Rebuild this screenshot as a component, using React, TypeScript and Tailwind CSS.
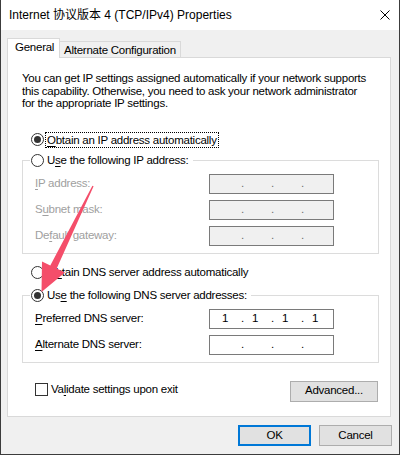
import React from 'react';

const font = "font-['Liberation_Sans','Noto_Sans_CJK_SC',sans-serif]";

function Key({ children }: { children: React.ReactNode }) {
  return <span className="underline decoration-1 underline-offset-[2px]">{children}</span>;
}

function Radio({ checked }: { checked?: boolean }) {
  return (
    <span className="flex h-[13px] w-[13px] shrink-0 items-center justify-center rounded-full border border-[#333333] bg-white">
      {checked && <span className="h-[7px] w-[7px] rounded-full bg-[#333333]" />}
    </span>
  );
}

function IpField({ values, disabled }: { values?: string[]; disabled?: boolean }) {
  return (
    <div
      className={`flex h-[20px] w-[125px] items-center overflow-hidden border border-[#7a7a7a] pl-[4px] ${
        disabled ? 'bg-[#f0f0f0] text-[#6d6d6d]' : 'bg-white text-black'
      }`}
    >
      {[0, 1, 2, 3].map((i) => (
        <React.Fragment key={i}>
          <span className="w-[22px] shrink-0 text-center">{values ? values[i] : ''}</span>
          {i < 3 && <span className="w-[8px] shrink-0 text-right">.</span>}
        </React.Fragment>
      ))}
    </div>
  );
}

function FieldRow({
  label,
  disabled,
  values,
}: {
  label: React.ReactNode;
  disabled?: boolean;
  values?: string[];
}) {
  return (
    <div className="flex items-center">
      <span className={`w-[174px] shrink-0 ${disabled ? 'text-[#a0a0a0]' : ''}`}>{label}</span>
      <IpField disabled={disabled} values={values} />
    </div>
  );
}

export default function App() {
  return (
    <div
      className={`relative flex h-[455px] w-[400px] flex-col overflow-hidden border-x border-b border-[#3c3c3c] bg-[#f0f0f0] text-[11.5px] tracking-[-0.25px] text-black ${font}`}
    >
      {/* title bar */}
      <div className="flex h-[30px] shrink-0 items-center justify-between bg-white pl-[8px] pr-[9px]">
        <span className="text-[12px] tracking-normal">Internet 协议版本 4 (TCP/IPv4) Properties</span>
        <svg width="10" height="10" viewBox="0 0 10 10" className="text-black">
          <path d="M0.5 0.5 L9.5 9.5 M9.5 0.5 L0.5 9.5" stroke="currentColor" strokeWidth="1" />
        </svg>
      </div>

      <div className="flex flex-col pl-[6px] pr-[8px] pt-[8px]">
        {/* tabs */}
        <div className="relative z-10 flex h-[20px] items-end">
          <div className="flex h-[20px] w-[53px] items-center border-x border-t border-[#d9d9d9] bg-white pb-[1px] pl-[7px]">
            General
          </div>
          <div className="mb-px flex h-[16px] w-[121px] items-center border-r border-t border-[#d9d9d9] bg-[#f0f0f0] pl-[4px] pt-[2px]">
            Alternate Configuration
          </div>
        </div>

        {/* panel */}
        <div className="-mt-px flex h-[360px] flex-col border border-[#d9d9d9] bg-white">
          <p className="px-[14px] pt-[14px] leading-[12.5px]">
            You can get IP settings assigned automatically if your network supports
            <br />
            this capability. Otherwise, you need to ask your network administrator
            <br />
            for the appropriate IP settings.
          </p>

          <div className="ml-[23px] mt-[22px] flex h-[16px] items-center gap-[1px]">
            <Radio checked />
            <span className="border border-dotted border-black px-[1px] leading-[14px]">
              <Key>O</Key>btain an IP address automatically
            </span>
          </div>

          <fieldset className="ml-[14px] mr-[11px] mt-[5px] border border-[#dcdcdc] pb-[7px]">
            <legend className="ml-[7px] flex h-[16px] items-center gap-[3px] pl-[1px] pr-[4px]">
              <Radio />
              <span>
                U<Key>s</Key>e the following IP address:
              </span>
            </legend>
            <div className="mt-[5px] flex flex-col gap-[6px] pl-[12px]">
              <FieldRow disabled label={<><Key>I</Key>P address:</>} />
              <FieldRow disabled label={<>S<Key>u</Key>bnet mask:</>} />
              <FieldRow disabled label={<>De<Key>f</Key>ault gateway:</>} />
            </div>
          </fieldset>

          <div className="ml-[23px] mt-[11px] flex h-[16px] items-center gap-[3px]">
            <Radio />
            <span>
              O<Key>b</Key>tain DNS server address automatically
            </span>
          </div>

          <fieldset className="ml-[14px] mr-[11px] mt-[7px] border border-[#dcdcdc] pb-[7px]">
            <legend className="ml-[7px] flex h-[16px] items-center gap-[3px] pl-[1px] pr-[4px]">
              <Radio checked />
              <span>
                Us<Key>e</Key> the following DNS server addresses:
              </span>
            </legend>
            <div className="mt-[5px] flex flex-col gap-[6px] pl-[12px]">
              <FieldRow label={<><Key>P</Key>referred DNS server:</>} values={['1', '1', '1', '1']} />
              <FieldRow label={<><Key>A</Key>lternate DNS server:</>} />
            </div>
          </fieldset>

          <div className="mt-[18px] flex items-start justify-between pl-[27px] pr-[12px]">
            <div className="flex items-center gap-[3px]">
              <span className="h-[13px] w-[13px] border border-[#333333] bg-white" />
              <span>
                Va<Key>l</Key>idate settings upon exit
              </span>
            </div>
            <button className="flex h-[21px] w-[88px] items-center justify-center border border-[#adadad] bg-[#e1e1e1]">
              Advanced...
            </button>
          </div>
        </div>

        {/* dialog buttons */}
        <div className="-mr-px mt-[8px] flex justify-end gap-[8px]">
          <button className="flex h-[21px] w-[73px] items-center justify-center border-2 border-[#0078d7] bg-[#e1e1e1]">
            OK
          </button>
          <button className="flex h-[21px] w-[73px] items-center justify-center border border-[#adadad] bg-[#e1e1e1]">
            Cancel
          </button>
        </div>
      </div>

      {/* annotation arrow */}
      <svg
        className="pointer-events-none absolute left-0 top-0"
        width="400"
        height="455"
        viewBox="0 0 400 455"
      >
        <polygon
          points="92.6,186.3 55.7,268.6 64,272.5 40.5,292 41,261.5 49.3,265.4 91.4,185.7"
          fill="#f44e6a"
        />
      </svg>
    </div>
  );
}
